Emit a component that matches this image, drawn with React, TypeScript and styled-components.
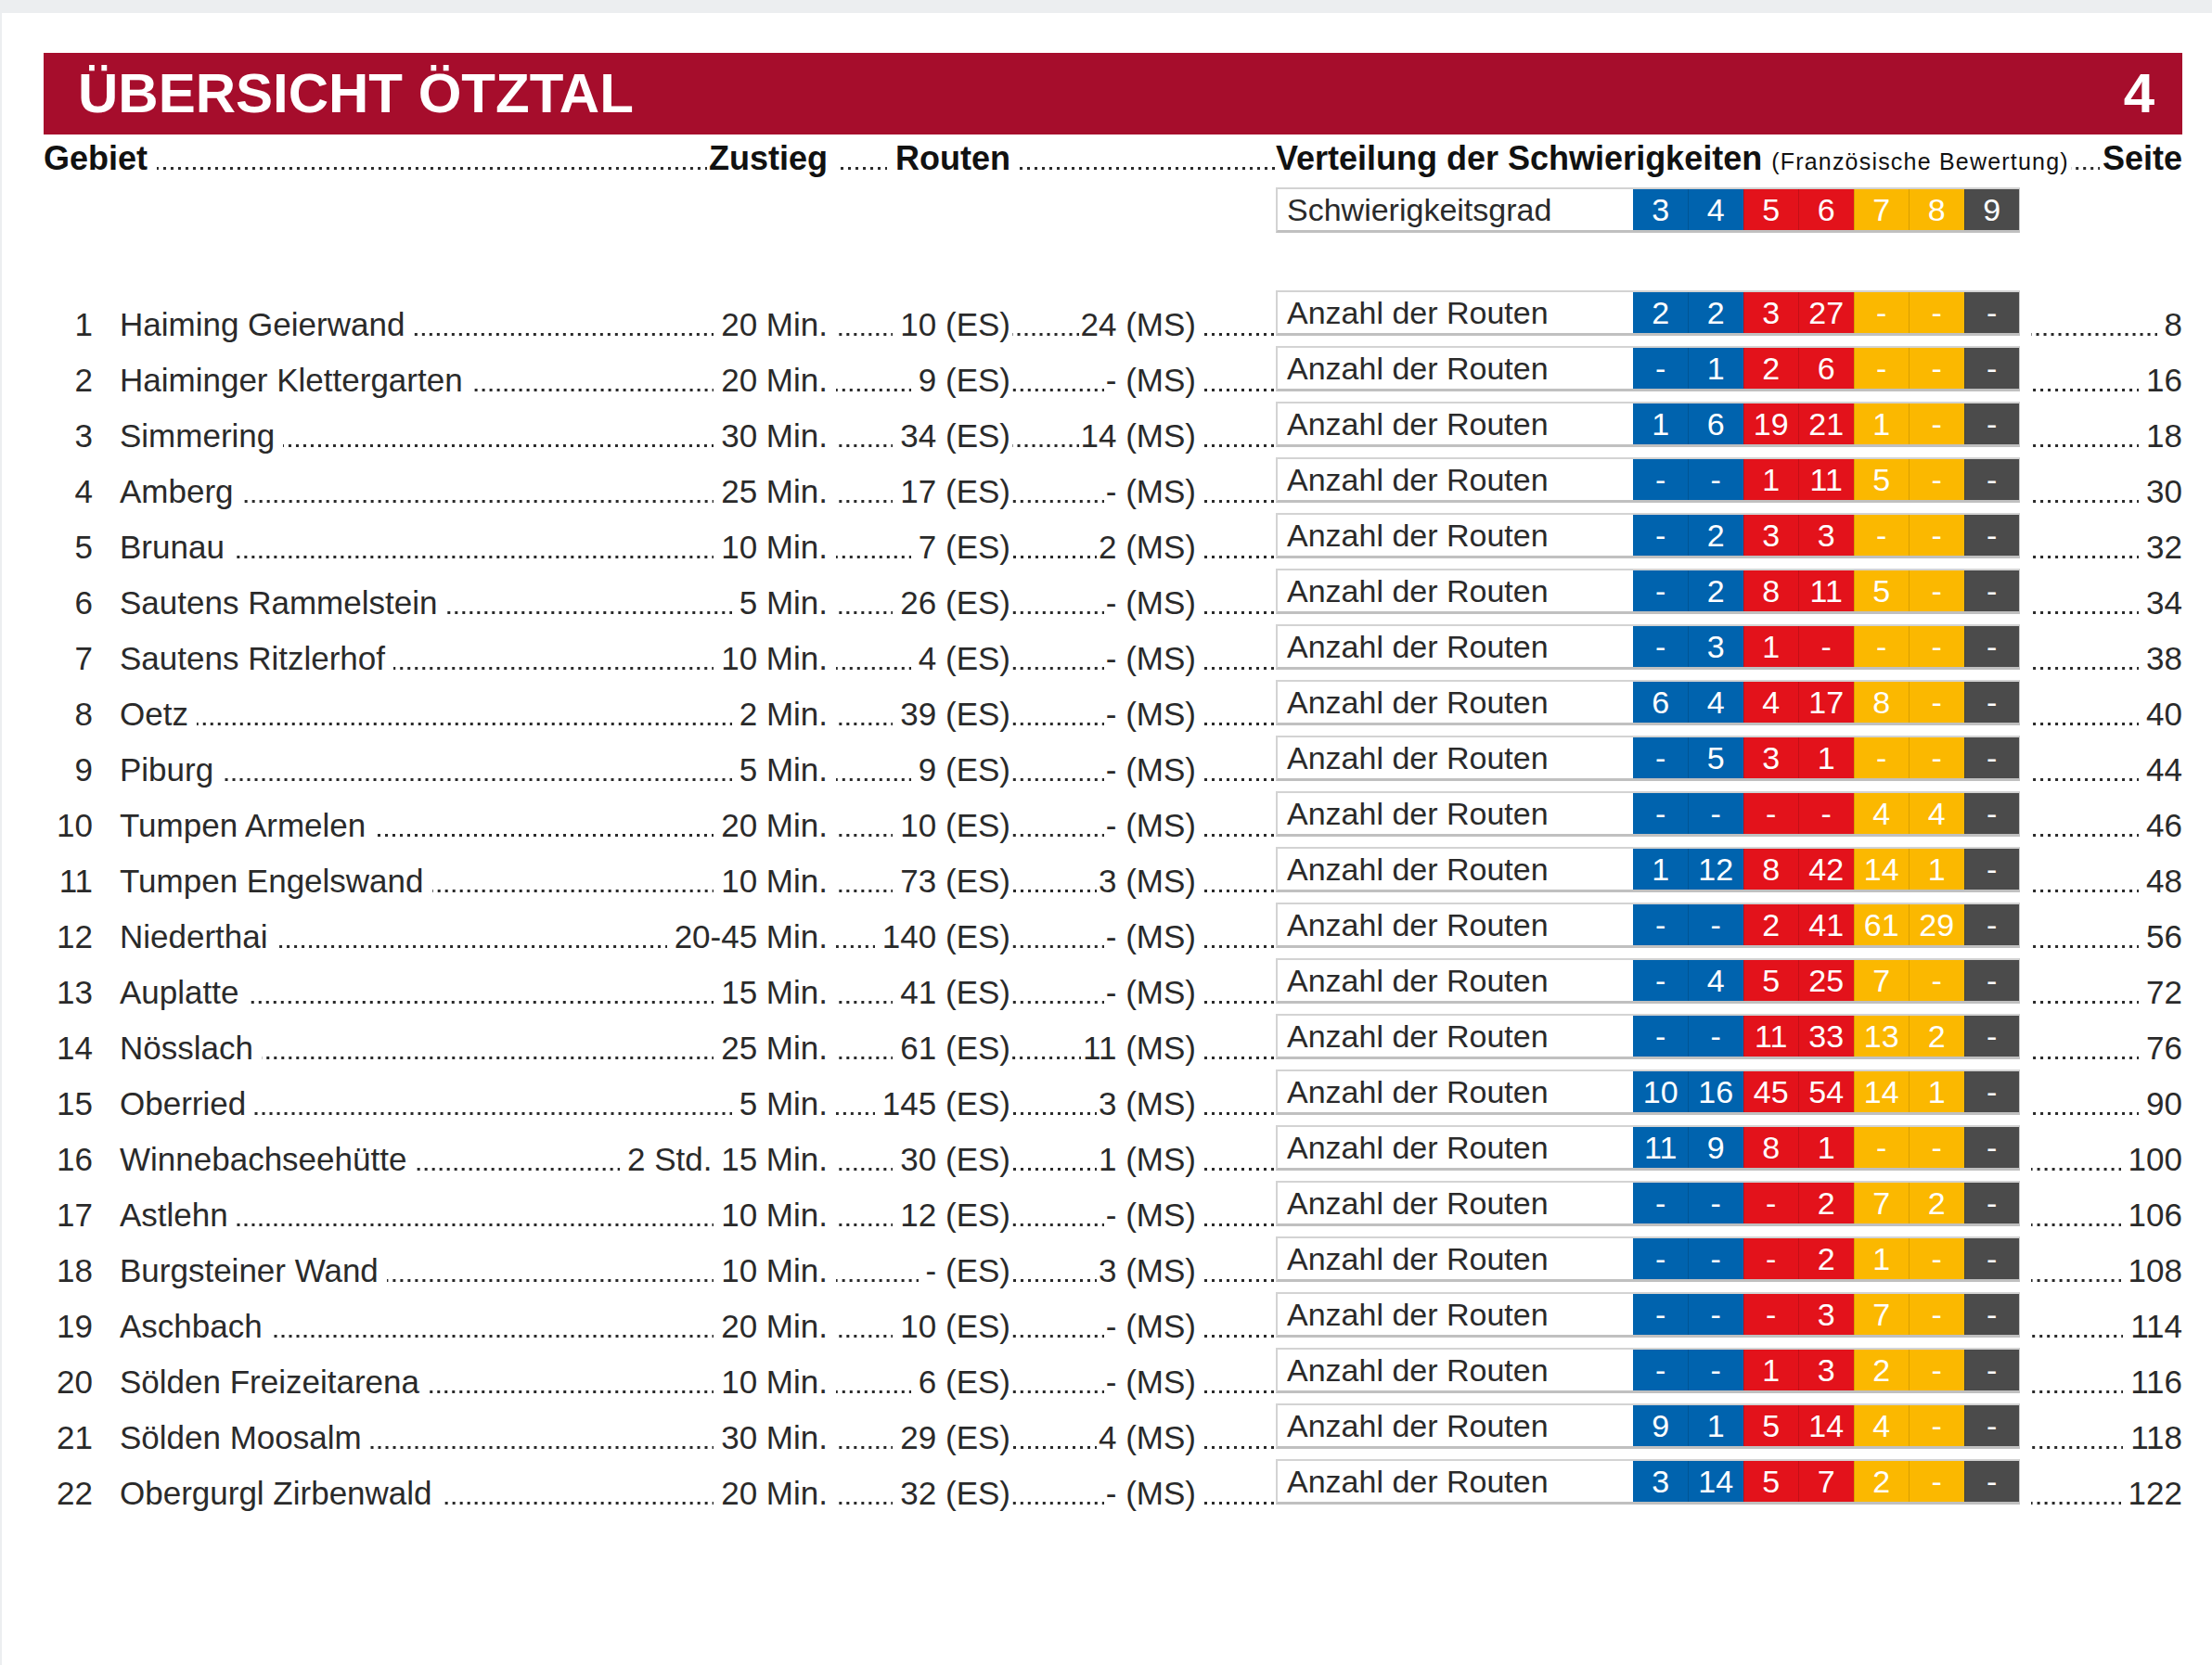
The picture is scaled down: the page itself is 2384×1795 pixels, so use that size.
import React from 'react';
import styled, { createGlobalStyle } from 'styled-components';

const GlobalStyle = createGlobalStyle`
  html, body { margin: 0; padding: 0; background: #eceef0; }
  body { font-family: "Liberation Sans", Arial, sans-serif; color: #2a2a2a; }
  * { box-sizing: border-box; }
`;

const COLS = '53px 792px 197px 200px 86px 802px 175px';

const Page = styled.div`
  margin: 14px 0 0 2px;
  background: #ffffff;
  min-height: 1781px;
  padding: 43px 32px 0 45px;
`;

const TitleBar = styled.header`
  height: 88px;
  background: #a60d2c;
  color: #ffffff;
  display: flex;
  align-items: center;
  justify-content: space-between;
  padding: 0 30px 0 37px;
  font-weight: 700;
  font-size: 60px;
  line-height: 1;
`;

const HeaderRow = styled.div`
  display: grid;
  grid-template-columns: ${COLS};
  height: 57px;
  padding-top: 6px;
  font-weight: 700;
  font-size: 36px;
  line-height: 40px;
  color: #111;
`;

const Span = styled.div<{ $from: number; $to: number }>`
  grid-column: ${p => p.$from} / ${p => p.$to};
  display: flex;
  align-items: baseline;
  min-width: 0;
  white-space: nowrap;
`;

/* dotted leader drawn as a repeating background, sitting on the text baseline */
const Leader = styled.span<{ $right?: boolean; $l?: number; $r?: number; $w?: number }>`
  flex: ${p => (p.$w ? `0 0 ${p.$w}px` : '1 1 0')};
  min-width: 0;
  height: 4px;
  margin-left: ${p => p.$l ?? 5}px;
  margin-right: ${p => p.$r ?? 5}px;
  background-image: linear-gradient(to right, #2a2a2a 0, #2a2a2a 3px, transparent 3px);
  background-size: 8px 3.5px;
  background-repeat: repeat-x;
  background-position: ${p => (p.$right ? 'right 2px bottom' : 'left bottom')};
`;

const Sub = styled.span`
  font-weight: 400;
  font-size: 25px;
  margin-left: 10px;
  letter-spacing: 1.2px;
`;

const LegendRow = styled.div`
  display: grid;
  grid-template-columns: ${COLS};
  height: 49px;
`;

const RowList = styled.div`
  margin-top: 62px;
  display: flex;
  flex-direction: column;
`;

const Row = styled.div`
  display: grid;
  grid-template-columns: ${COLS};
  height: 60px;
  align-items: end;
  font-size: 35px;
  line-height: 35px;
  color: #2a2a2a;
`;

const Num = styled.span`
  text-align: right;
  margin-bottom: 6px;
`;

const TextCell = styled.span<{ $pl?: number; $span?: number }>`
  display: flex;
  align-items: baseline;
  min-width: 0;
  white-space: nowrap;
  margin-bottom: 6px;
  padding-left: ${p => p.$pl ?? 0}px;
  grid-column: ${p => (p.$span ? `span ${p.$span}` : 'auto')};
`;

const Box = styled.div`
  grid-column: 6 / 7;
  align-self: start;
  height: 49px;
  display: grid;
  grid-template-columns: 1fr repeat(7, 59.5px);
  border: 2px solid #d3d3d3;
  border-bottom: 3px solid #c0c0c0;
  border-right: 1px solid #c8c8c8;
  background: #ffffff;
  font-size: 34px;
  line-height: 44px;
`;

const Label = styled.span`
  padding-left: 10px;
  color: #2a2a2a;
  white-space: nowrap;
`;

const GRADE_COLORS = ['#0063ae', '#0063ae', '#e3121b', '#e3121b', '#fbb800', '#fbb800', '#4b4b4b'];

const Cell = styled.span<{ $bg: string; $first?: boolean }>`
  background: ${p => p.$bg};
  color: #ffffff;
  text-align: center;
  border-left: 1px solid ${p => (p.$first ? 'transparent' : 'rgba(0,0,0,0.14)')};
`;

type Area = {
  name: string;
  time: string;
  es: string;
  ms: string;
  grades: string[];
  page: string;
};

const g = (s: string) => s.split(' ');

const AREAS: Area[] = [
  { name: 'Haiming Geierwand', time: '20 Min.', es: '10', ms: '24', grades: g('2 2 3 27 - - -'), page: '8' },
  { name: 'Haiminger Klettergarten', time: '20 Min.', es: '9', ms: '-', grades: g('- 1 2 6 - - -'), page: '16' },
  { name: 'Simmering', time: '30 Min.', es: '34', ms: '14', grades: g('1 6 19 21 1 - -'), page: '18' },
  { name: 'Amberg', time: '25 Min.', es: '17', ms: '-', grades: g('- - 1 11 5 - -'), page: '30' },
  { name: 'Brunau', time: '10 Min.', es: '7', ms: '2', grades: g('- 2 3 3 - - -'), page: '32' },
  { name: 'Sautens Rammelstein', time: '5 Min.', es: '26', ms: '-', grades: g('- 2 8 11 5 - -'), page: '34' },
  { name: 'Sautens Ritzlerhof', time: '10 Min.', es: '4', ms: '-', grades: g('- 3 1 - - - -'), page: '38' },
  { name: 'Oetz', time: '2 Min.', es: '39', ms: '-', grades: g('6 4 4 17 8 - -'), page: '40' },
  { name: 'Piburg', time: '5 Min.', es: '9', ms: '-', grades: g('- 5 3 1 - - -'), page: '44' },
  { name: 'Tumpen Armelen', time: '20 Min.', es: '10', ms: '-', grades: g('- - - - 4 4 -'), page: '46' },
  { name: 'Tumpen Engelswand', time: '10 Min.', es: '73', ms: '3', grades: g('1 12 8 42 14 1 -'), page: '48' },
  { name: 'Niederthai', time: '20-45 Min.', es: '140', ms: '-', grades: g('- - 2 41 61 29 -'), page: '56' },
  { name: 'Auplatte', time: '15 Min.', es: '41', ms: '-', grades: g('- 4 5 25 7 - -'), page: '72' },
  { name: 'Nösslach', time: '25 Min.', es: '61', ms: '11', grades: g('- - 11 33 13 2 -'), page: '76' },
  { name: 'Oberried', time: '5 Min.', es: '145', ms: '3', grades: g('10 16 45 54 14 1 -'), page: '90' },
  { name: 'Winnebachseehütte', time: '2 Std. 15 Min.', es: '30', ms: '1', grades: g('11 9 8 1 - - -'), page: '100' },
  { name: 'Astlehn', time: '10 Min.', es: '12', ms: '-', grades: g('- - - 2 7 2 -'), page: '106' },
  { name: 'Burgsteiner Wand', time: '10 Min.', es: '-', ms: '3', grades: g('- - - 2 1 - -'), page: '108' },
  { name: 'Aschbach', time: '20 Min.', es: '10', ms: '-', grades: g('- - - 3 7 - -'), page: '114' },
  { name: 'Sölden Freizeitarena', time: '10 Min.', es: '6', ms: '-', grades: g('- - 1 3 2 - -'), page: '116' },
  { name: 'Sölden Moosalm', time: '30 Min.', es: '29', ms: '4', grades: g('9 1 5 14 4 - -'), page: '118' },
  { name: 'Obergurgl Zirbenwald', time: '20 Min.', es: '32', ms: '-', grades: g('3 14 5 7 2 - -'), page: '122' },
];

function GradeBox({ label, values }: { label: string; values: string[] }) {
  return (
    <Box>
      <Label>{label}</Label>
      {values.map((v, i) => (
        <Cell key={i} $bg={GRADE_COLORS[i]} $first={i === 0}>
          {v}
        </Cell>
      ))}
    </Box>
  );
}

export default function App() {
  return (
    <>
      <GlobalStyle />
      <Page>
        <TitleBar>
          <span>ÜBERSICHT ÖTZTAL</span>
          <span>4</span>
        </TitleBar>
        <HeaderRow>
          <Span $from={1} $to={3}>
            <span>Gebiet</span>
            <Leader $l={10} $r={2} $right />
            <span>Zustieg</span>
          </Span>
          <Span $from={3} $to={6}>
            <Leader $l={10} $r={9} $right />
            <span>Routen</span>
            <Leader $l={10} $r={1} $w={275} />
          </Span>
          <Span $from={6} $to={8}>
            <span>Verteilung der Schwierigkeiten</span>
            <Sub>(Französische Bewertung)</Sub>
            <Leader $l={2} $r={3} $right />
            <span>Seite</span>
          </Span>
        </HeaderRow>
        <LegendRow>
          <GradeBox label="Schwierigkeitsgrad" values={['3', '4', '5', '6', '7', '8', '9']} />
        </LegendRow>
        <RowList>
          {AREAS.map((a, i) => (
            <Row key={a.name}>
              <Num>{i + 1}</Num>
              <TextCell $pl={29}>
                <span>{a.name}</span>
                <Leader $l={9} $r={8} $right />
                <span>{a.time}</span>
              </TextCell>
              <TextCell>
                <Leader $l={9} $r={8} $right />
                <span>{a.es} (ES)</span>
              </TextCell>
              <TextCell $span={2}>
                <Leader $l={2} $r={2} $right />
                <span>{a.ms} (MS)</span>
                <Leader $l={9} $r={1} $w={76} />
              </TextCell>
              <GradeBox label="Anzahl der Routen" values={a.grades} />
              <TextCell>
                <Leader $l={12} $r={8} $right />
                <span>{a.page}</span>
              </TextCell>
            </Row>
          ))}
        </RowList>
      </Page>
    </>
  );
}
